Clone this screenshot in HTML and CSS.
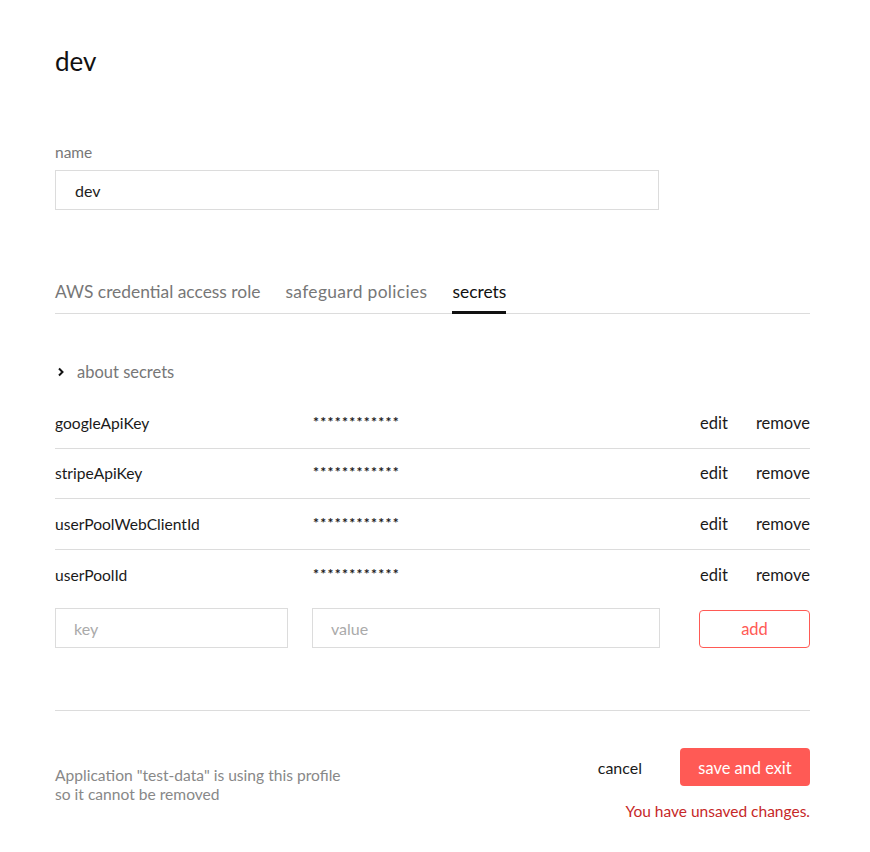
FILE: index.html
```html
<!DOCTYPE html>
<html>
<head>
<meta charset="utf-8">
<link rel="stylesheet" href="styles.css">
</head>
<body>
<div class="page">
  <h1 class="title">dev</h1>
  <div class="field">
    <label class="label">name</label>
    <div class="input name-input">dev</div>
  </div>
  <div class="tabs">
    <span class="tab">AWS credential access role</span>
    <span class="tab wide">safeguard policies</span>
    <span class="tab active">secrets</span>
  </div>
  <div class="about">
    <svg class="chev" width="8" height="10" viewBox="0 0 8 10"><path d="M2 1.5 L5.5 5 L2 8.5" fill="none" stroke="#111" stroke-width="2"/></svg>
    <span>about secrets</span>
  </div>
  <div class="secrets">
    <div class="row"><span class="key">googleApiKey</span><span class="val">************</span><span class="act">edit</span><span class="act rm">remove</span></div>
    <div class="row"><span class="key">stripeApiKey</span><span class="val">************</span><span class="act">edit</span><span class="act rm">remove</span></div>
    <div class="row"><span class="key">userPoolWebClientId</span><span class="val">************</span><span class="act">edit</span><span class="act rm">remove</span></div>
    <div class="row last"><span class="key">userPoolId</span><span class="val">************</span><span class="act">edit</span><span class="act rm">remove</span></div>
  </div>
  <div class="add-row">
    <div class="input ph key-in">key</div>
    <div class="input ph val-in">value</div>
    <button class="add-btn">add</button>
  </div>
  <div class="divider"></div>
  <div class="footer">
    <p class="note">Application "test-data" is using this profile<br>so it cannot be removed</p>
    <div class="actions">
      <div class="btns">
        <button class="cancel">cancel</button>
        <button class="save">save and exit</button>
      </div>
      <div class="unsaved">You have unsaved changes.</div>
    </div>
  </div>
</div>
</body>
</html>
```
FILE: styles.css
```css
* { box-sizing: border-box; }
body {
  margin: 0;
  background: #fff;
  font-family: Lato, "Noto Sans", sans-serif;
  color: #1a1a1a;
}
.page {
  width: 810px;
  padding: 46px 0 0 55px;
}
.title {
  margin: 0;
  font-size: 26px;
  font-weight: 400;
  line-height: 30px;
  color: #111;
}
.field { margin-top: 67px; }
.label {
  display: block;
  font-size: 15.5px;
  line-height: 18px;
  color: #777;
}
.input {
  border: 1px solid #dcdcdc;
  height: 40px;
  display: flex;
  align-items: center;
  font-size: 16px;
}
.name-input {
  margin-top: 9px;
  width: 604px;
  padding-left: 19px;
  color: #222;
}
.tabs {
  margin-top: 72px;
  display: flex;
  gap: 25px;
  border-bottom: 1px solid #dcdcdc;
}
.tab {
  font-size: 17.4px;
  line-height: 20px;
  padding-bottom: 9px;
  color: #777;
  border-bottom: 3px solid transparent;
  margin-bottom: -1px;
}
.tab.wide { letter-spacing: 0.35px; }
.tab.active {
  color: #111;
  border-bottom-color: #111;
}
.about {
  margin-top: 48px;
  display: flex;
  align-items: center;
  gap: 12px;
  font-size: 16.5px;
  line-height: 20px;
  color: #777;
  padding-left: 2px;
}
.secrets { margin-top: 16px; }
.row {
  display: flex;
  align-items: center;
  height: 50.5px;
  border-bottom: 1px solid #dcdcdc;
  font-size: 16.5px;
  color: #1a1a1a;
}
.row.last { border-bottom: none; }
.key { width: 258px; font-size: 15.6px; }
.val {
  flex: 1;
  font-size: 14px;
  letter-spacing: 1.3px;
  font-weight: 700;
  margin-top: -3px;
}
.act { margin-left: 28px; }
.act:first-of-type { margin-left: 0; }
.add-row {
  margin-top: 8px;
  display: flex;
  align-items: flex-end;
}
.ph { color: #aaa; }
.key-in { width: 233px; padding-left: 18px; }
.val-in { width: 348px; margin-left: 24px; padding-left: 18px; }
.add-btn {
  margin-left: 39px;
  width: 111px;
  height: 38px;
  border: 1px solid #ff5a55;
  border-radius: 4px;
  background: #fff;
  color: #ff5a55;
  font-family: inherit;
  font-size: 16.5px;
}
.divider {
  margin-top: 62px;
  height: 1px;
  background: #dcdcdc;
}
.footer {
  display: flex;
  justify-content: space-between;
  align-items: flex-start;
  padding-top: 37px;
}
.note {
  margin: 18px 0 0;
  font-size: 15.6px;
  line-height: 19px;
  color: #888;
}
.actions {
  display: flex;
  flex-direction: column;
  align-items: flex-end;
}
.btns { display: flex; align-items: center; }
.cancel {
  border: none;
  background: none;
  font-family: inherit;
  font-size: 16px;
  color: #1a1a1a;
  padding: 0;
  margin-right: 38px;
}
.save {
  width: 130px;
  height: 38px;
  border: none;
  border-radius: 4px;
  background: #ff5a55;
  color: #fff;
  font-family: inherit;
  font-size: 16.4px;
}
.unsaved {
  margin-top: 16px;
  font-size: 15.5px;
  color: #c62828;
}
```
